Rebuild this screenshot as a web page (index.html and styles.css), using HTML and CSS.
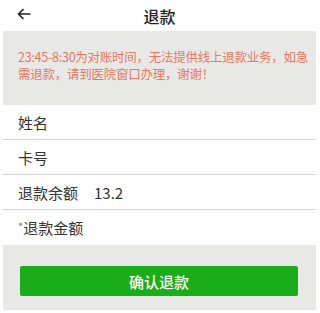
FILE: index.html
```html
<!DOCTYPE html>
<html lang="zh-CN">
<head>
    <meta charset="UTF-8">
    <meta name="viewport" content="width=device-width, initial-scale=1.0">
    <title>退款</title>
    <link rel="stylesheet" href="styles.css">
</head>
<body>
<div class="page">
    <div class="header">
        <svg class="back" width="14" height="12" viewBox="0 0 14 12">
            <path d="M13.5 6H1.5M6.5 1L1.5 6l5 5" fill="none" stroke="#222" stroke-width="1.6"/>
        </svg>
        <h1>退款</h1>
    </div>

    <div class="notice">23:45-8:30为对账时间，无法提供线上退款业务，如急需退款，请到医院窗口办理，谢谢！</div>

    <div class="form">
        <div class="row"><span class="label">姓名</span></div>
        <div class="row"><span class="label">卡号</span></div>
        <div class="row"><span class="label">退款余额</span><span class="value">13.2</span></div>
        <div class="row last"><span class="label"><i>*</i>退款金额</span></div>
    </div>

    <div class="actions">
        <button type="button">确认退款</button>
    </div>
</div>
</body>
</html>
```

FILE: styles.css
```css
body {
    margin: 0;
    background: #ffffff;
    font-family: "Noto Sans CJK SC", "Noto Sans", sans-serif;
    color: #222;
}

.page {
    padding: 0 4px 0 3px;
}

/* top bar */
.header {
    height: 31px;
    display: flex;
    align-items: center;
    justify-content: center;
    position: relative;
}

.back {
    position: absolute;
    left: 14px;
    top: 8px;
}

.header h1 {
    margin: 0;
    font-size: 16px;
    font-weight: 500;
    color: #222;
}

/* notice box */
.notice {
    background: #e8e8e6;
    color: #e8785f;
    font-size: 12.5px;
    letter-spacing: -0.25px;
    line-height: 17px;
    padding: 17px 6px 21px 15px;
    height: 36px;
}

/* rows */
.row {
    height: 34px;
    border-bottom: 1px solid #d4d4d4;
    display: flex;
    align-items: center;
    padding: 0 15px;
    font-size: 15px;
    color: #333;
}

.row.last {
    border-bottom: none;
    height: 35px;
}

.label i {
    font-style: normal;
    font-size: 11px;
    color: #777;
    vertical-align: 3px;
}

.value {
    margin-left: 16px;
}

/* bottom button */
.actions {
    background: #e8e8e6;
    padding: 21px 18px 14px 17px;
    height: 30px;
}

button {
    width: 100%;
    height: 30px;
    border: none;
    border-radius: 2px;
    background: #1aad19;
    color: #ffffff;
    font-family: inherit;
    font-size: 15px;
    font-weight: 500;
    padding: 0;
}
```
